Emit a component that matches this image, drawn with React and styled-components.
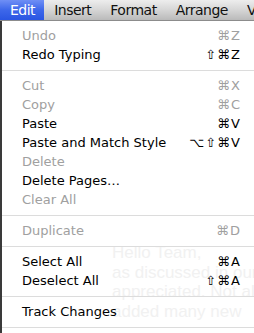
import styled, { createGlobalStyle } from 'styled-components'

const GlobalStyle = createGlobalStyle`
	html, body {
		margin: 0;
		padding: 0;
		background: #ffffff;
		overflow: hidden;
	}
`

const Screen = styled.div`
	width: 254px;
	height: 333px;
	overflow: hidden;
	display: flex;
	flex-direction: column;
	font-family: 'DejaVu Sans', 'Liberation Sans', sans-serif;
`

const MenuBar = styled.div`
	height: 21px;
	flex-shrink: 0;
	display: flex;
	align-items: stretch;
	background: linear-gradient(#ededed 0%, #d8d8d8 45%, #bababa 100%);
	border-bottom: 1px solid #8c8c8c;
	box-sizing: border-box;
`

const MenuTitle = styled.div`
	display: flex;
	align-items: center;
	padding: 0 9px 1px 10px;
	font-size: 14px;
	letter-spacing: -0.5px;
	white-space: nowrap;
	color: ${(p) => (p.$active ? '#ffffff' : '#111111')};
	background: ${(p) =>
		p.$active ? 'linear-gradient(#6f8ff5 0%, #3d67ea 50%, #2a55e2 100%)' : 'transparent'};
`

const Workspace = styled.div`
	position: relative;
	flex: 1;
`

const Document = styled.div`
	padding: 222px 0 0 112px;
	font-family: 'Liberation Sans', Arial, sans-serif;
	font-size: 17px;
	line-height: 19.5px;
	color: #f1f1f1;
	-webkit-font-smoothing: antialiased;
	white-space: nowrap;
`

const Dropdown = styled.div`
	position: absolute;
	inset: 0;
	padding-top: 5px;
	border-left: 2px solid #3a3a3a;
	box-sizing: border-box;
`

const Item = styled.div`
	height: 19px;
	display: flex;
	align-items: center;
	justify-content: space-between;
	padding: 0 14px 0 20px;
	font-size: 13px;
	color: ${(p) => (p.$disabled ? '#a0a0a0' : '#000000')};
`

const Shortcut = styled.span`
	letter-spacing: 1px;
	margin-right: -1px;
`

const Separator = styled.div`
	height: 12px;
	display: flex;
	align-items: center;
	&::after {
		content: '';
		flex: 1;
		height: 1px;
		background: #dcdcdc;
	}
`

const groups = [
	[
		{ label: 'Undo', key: '⌘Z', disabled: true },
		{ label: 'Redo Typing', key: '⇧⌘Z' },
	],
	[
		{ label: 'Cut', key: '⌘X', disabled: true },
		{ label: 'Copy', key: '⌘C', disabled: true },
		{ label: 'Paste', key: '⌘V' },
		{ label: 'Paste and Match Style', key: '⌥⇧⌘V' },
		{ label: 'Delete', disabled: true },
		{ label: 'Delete Pages…' },
		{ label: 'Clear All', disabled: true },
	],
	[{ label: 'Duplicate', key: '⌘D', disabled: true }],
	[
		{ label: 'Select All', key: '⌘A' },
		{ label: 'Deselect All', key: '⇧⌘A' },
	],
	[{ label: 'Track Changes' }],
]

const App = () => {
	return (
		<>
			<GlobalStyle />
			<Screen>
				<MenuBar>
					<MenuTitle $active>Edit</MenuTitle>
					<MenuTitle>Insert</MenuTitle>
					<MenuTitle>Format</MenuTitle>
					<MenuTitle>Arrange</MenuTitle>
					<MenuTitle>View</MenuTitle>
				</MenuBar>
				<Workspace>
					<Document>
						<div>Hello Team,</div>
						<div>as discussed in our</div>
						<div>appreciated. Not all</div>
						<div>added many new</div>
					</Document>
					<Dropdown>
						{groups.map((group, i) => (
							<div key={i}>
								{group.map((item) => (
									<Item key={item.label} $disabled={item.disabled}>
										<span>{item.label}</span>
										{item.key && <Shortcut>{item.key}</Shortcut>}
									</Item>
								))}
								<Separator />
							</div>
						))}
					</Dropdown>
				</Workspace>
			</Screen>
		</>
	)
}

export default App
